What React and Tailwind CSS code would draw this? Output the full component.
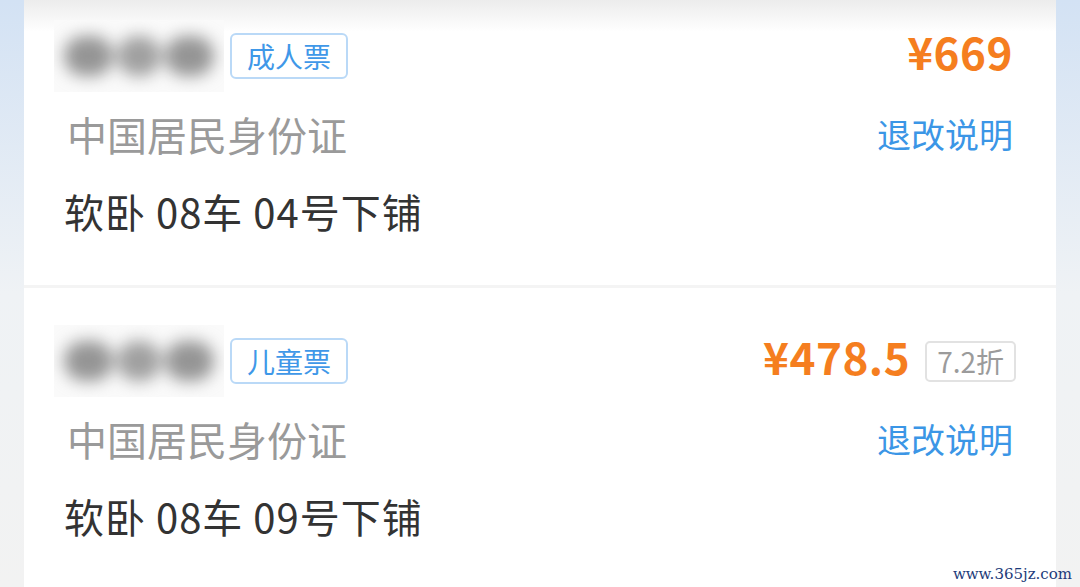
import React from "react";

const font = { fontFamily: '"Noto Sans CJK SC", "Noto Sans", sans-serif' };

const passengers = [
  { type: "成人票", price: "¥669", discount: null, seat: "软卧 08车 04号下铺", first: true },
  { type: "儿童票", price: "¥478.5", discount: "7.2折", seat: "软卧 08车 09号下铺", first: false },
];

const BlurName = () => (
  <div className="relative w-[170px] h-[72px] bg-[#fafafa] overflow-hidden shrink-0">
    <div className="absolute inset-0 flex items-center justify-center gap-[4px] px-[10px] blur-[8px]">
      <div className="w-[50px] h-[40px] rounded-full bg-[#959595]" />
      <div className="w-[44px] h-[40px] rounded-full bg-[#a0a0a0]" />
      <div className="w-[50px] h-[40px] rounded-full bg-[#959595]" />
    </div>
  </div>
);

const PassengerRow = ({ p }) => (
  <div className={`pl-[30px] pr-[43px] pb-[50px] ${p.first ? "pt-[20px]" : "pt-[37px]"}`}>
    <div className="flex items-center h-[72px]">
      <BlurName />
      <span className="ml-[6px] h-[46px] px-[15px] flex items-center border-2 border-[#bad9f7] rounded-[6px] text-[28px] text-[#3f98e8] leading-none">
        {p.type}
      </span>
      <div className="ml-auto flex items-center">
        <span className="mb-[10px] text-[44px] font-bold text-[#f57e1f] leading-none tracking-[0.5px]">
          {p.price}
        </span>
        {p.discount && (
          <span className="ml-[15px] -mr-[3px] h-[41px] px-[10px] flex items-center border-2 border-[#e2e2e2] rounded-[5px] text-[28px] text-[#9b9b9b] leading-none">
            {p.discount}
          </span>
        )}
      </div>
    </div>
    <div className="mt-[18px] h-[48px] flex items-center justify-between pl-[13px]">
      <span className="text-[40px] text-[#9a9a9a] leading-none">中国居民身份证</span>
      <span className="text-[34px] text-[#3b96e6] leading-none">退改说明</span>
    </div>
    <div className="mt-[29px] h-[48px] flex items-center pl-[10px]">
      <span className="text-[40px] text-[#333333] leading-none tracking-[1px]">{p.seat}</span>
    </div>
  </div>
);

export default function App() {
  return (
    <div
      className="relative w-[1080px] h-[587px] overflow-hidden bg-gradient-to-b from-[#d3e2f4] via-[#eff2f5] to-[#f2f2f2]"
      style={font}
    >
      <div className="relative mx-[24px] h-full bg-white">
        <div className="absolute top-0 left-0 right-0 h-[32px] bg-gradient-to-b from-[#ececec] to-transparent pointer-events-none" />
        {passengers.map((p, i) => (
          <React.Fragment key={i}>
            {i > 0 && <div className="h-[3px] bg-[#f4f4f4]" />}
            <PassengerRow p={p} />
          </React.Fragment>
        ))}
      </div>
      <div
        className="absolute right-[8px] bottom-[5px] text-[15px] text-[#1d3b7a] leading-none"
        style={{ fontFamily: '"DejaVu Serif", serif' }}
      >
        www.365jz.com
      </div>
    </div>
  );
}
